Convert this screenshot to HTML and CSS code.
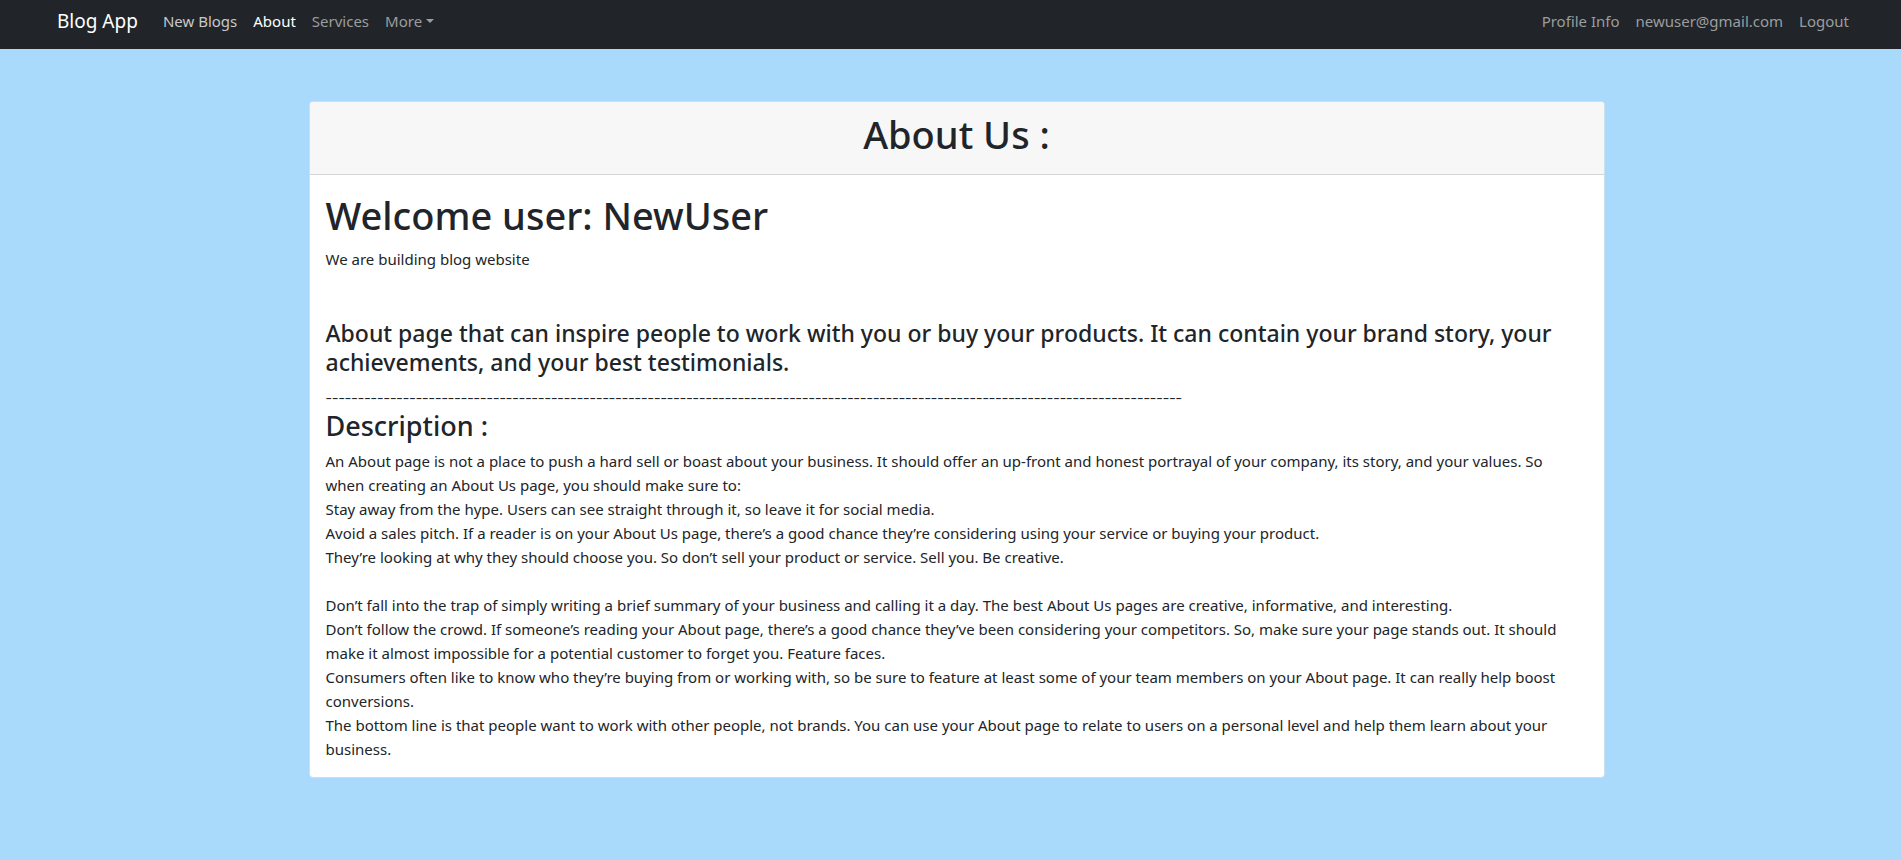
FILE: index.html
```html
<!DOCTYPE html>
<html lang="en">
<head>
<meta charset="utf-8">
<meta name="viewport" content="width=device-width, initial-scale=1">
<title>Blog App - About</title>
<link rel="stylesheet" href="styles.css">
</head>
<body>
<nav class="navbar">
  <a class="navbar-brand" href="#">Blog App</a>
  <ul class="nav-list">
    <li><a class="nav-link nav-link-bright" href="#">New Blogs</a></li>
    <li><a class="nav-link nav-link-active" href="#" aria-current="page">About</a></li>
    <li><a class="nav-link" href="#">Services</a></li>
    <li><button class="nav-link dropdown-toggle" type="button" aria-haspopup="true">More</button></li>
  </ul>
  <ul class="nav-list nav-list-end">
    <li><a class="nav-link" href="#">Profile Info</a></li>
    <li><a class="nav-link" href="#">newuser@gmail.com</a></li>
    <li><a class="nav-link" href="#">Logout</a></li>
  </ul>
</nav>
<main class="container">
  <article class="card">
    <header class="card-header">
      <h1 class="title">About Us :</h1>
    </header>
    <div class="card-body">
      <h1 class="title">Welcome user: NewUser</h1>
      <p class="intro">We are building blog website</p>
      <h4 class="lead">About page that can inspire people to work with you or buy your products. It can contain your brand story, your achievements, and your best testimonials.</h4>
      <div class="dashes">-------------------------------------------------------------------------------------------------------------------------------------</div>
      <h3 class="subtitle">Description :</h3>
      <p class="text">An About page is not a place to push a hard sell or boast about your business. It should offer an up-front and honest portrayal of your company, its story, and your values. So<br>
      when creating an About Us page, you should make sure to:<br>
      Stay away from the hype. Users can see straight through it, so leave it for social media.<br>
      Avoid a sales pitch. If a reader is on your About Us page, there’s a good chance they’re considering using your service or buying your product.<br>
      They’re looking at why they should choose you. So don’t sell your product or service. Sell you. Be creative.<br>
      <br>
      Don’t fall into the trap of simply writing a brief summary of your business and calling it a day. The best About Us pages are creative, informative, and interesting.<br>
      Don’t follow the crowd. If someone’s reading your About page, there’s a good chance they’ve been considering your competitors. So, make sure your page stands out. It should make it almost impossible for a potential customer to forget you. Feature faces.<br>
      Consumers often like to know who they’re buying from or working with, so be sure to feature at least some of your team members on your About page. It can really help boost conversions.<br>
      The bottom line is that people want to work with other people, not brands. You can use your About page to relate to users on a personal level and help them learn about your business.</p>
    </div>
  </article>
</main>
</body>
</html>
```
FILE: styles.css
```css
* {
  box-sizing: border-box;
}

body {
  margin: 0;
  background: #a9dafc;
  color: #212529;
  font-family: "Noto Sans", "Open Sans", sans-serif;
  font-size: 15px;
  line-height: 24px;
}

.navbar {
  display: flex;
  flex-wrap: wrap;
  align-items: center;
  padding: 1px 44px 8px 57px;
  background: #212529;
}

.navbar-brand {
  margin-right: 17px;
  color: #fff;
  font-size: 19px;
  text-decoration: none;
}

.nav-list {
  display: flex;
  margin: 0;
  padding: 0;
  list-style: none;
}

.nav-list-end {
  margin-left: auto;
}

.nav-link {
  display: block;
  padding: 8px;
  border: 0;
  background: none;
  color: #9b9d9f;
  font: inherit;
  text-decoration: none;
}

.nav-link-bright {
  color: #c8c9ca;
}

.nav-link-active {
  color: #fff;
}

.dropdown-toggle {
  display: flex;
  align-items: center;
  gap: 4px;
}

.dropdown-toggle::after {
  content: "";
  border-top: 4px solid;
  border-right: 4px solid transparent;
  border-left: 4px solid transparent;
}

.container {
  max-width: 1320px;
  margin: 0 auto;
  padding: 52px 6px 52px 18px;
}

.card {
  border: 1px solid #c9e0ef;
  border-radius: 4px;
  background: #fff;
}

.card-header {
  padding: 8px 16px;
  border-bottom: 1px solid #d5d5d5;
  border-radius: 3px 3px 0 0;
  background: #f7f7f7;
  text-align: center;
}

.card-body {
  padding: 16px;
}

.title {
  margin: 0 0 8px;
  font-size: 38px;
  font-weight: 500;
  line-height: 48px;
}

.intro {
  margin: 0 0 48px;
}

.lead {
  margin: 0 0 8px;
  font-size: 23px;
  font-weight: 500;
  line-height: 29px;
}

.dashes {
  font-size: 20px;
  font-weight: 300;
  overflow-wrap: anywhere;
}

.subtitle {
  margin: 0 0 6px;
  font-size: 27px;
  font-weight: 500;
  line-height: 34px;
}

.text {
  margin: 0;
}
```
